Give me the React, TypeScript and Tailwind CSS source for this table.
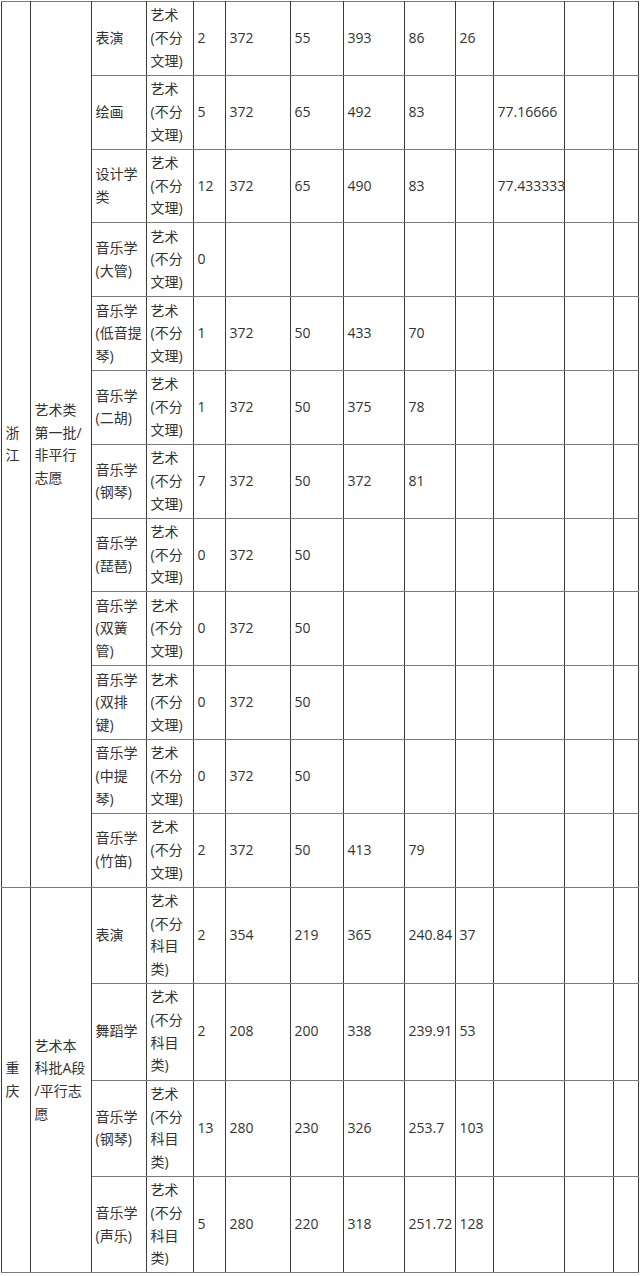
import React from "react";

type Row = { major: string[]; kind: string[]; cells: string[] };

const zjKind = ["艺术", "(不分", "文理)"];
const cqKind = ["艺术", "(不分", "科目", "类)"];

const zj: Row[] = [
  { major: ["表演"], kind: zjKind, cells: ["2", "372", "55", "393", "86", "26", "", "", ""] },
  { major: ["绘画"], kind: zjKind, cells: ["5", "372", "65", "492", "83", "", "77.16666", "", ""] },
  { major: ["设计学", "类"], kind: zjKind, cells: ["12", "372", "65", "490", "83", "", "77.433333", "", ""] },
  { major: ["音乐学", "(大管)"], kind: zjKind, cells: ["0", "", "", "", "", "", "", "", ""] },
  { major: ["音乐学", "(低音提", "琴)"], kind: zjKind, cells: ["1", "372", "50", "433", "70", "", "", "", ""] },
  { major: ["音乐学", "(二胡)"], kind: zjKind, cells: ["1", "372", "50", "375", "78", "", "", "", ""] },
  { major: ["音乐学", "(钢琴)"], kind: zjKind, cells: ["7", "372", "50", "372", "81", "", "", "", ""] },
  { major: ["音乐学", "(琵琶)"], kind: zjKind, cells: ["0", "372", "50", "", "", "", "", "", ""] },
  { major: ["音乐学", "(双簧", "管)"], kind: zjKind, cells: ["0", "372", "50", "", "", "", "", "", ""] },
  { major: ["音乐学", "(双排", "键)"], kind: zjKind, cells: ["0", "372", "50", "", "", "", "", "", ""] },
  { major: ["音乐学", "(中提", "琴)"], kind: zjKind, cells: ["0", "372", "50", "", "", "", "", "", ""] },
  { major: ["音乐学", "(竹笛)"], kind: zjKind, cells: ["2", "372", "50", "413", "79", "", "", "", ""] },
];

const cq: Row[] = [
  { major: ["表演"], kind: cqKind, cells: ["2", "354", "219", "365", "240.84", "37", "", "", ""] },
  { major: ["舞蹈学"], kind: cqKind, cells: ["2", "208", "200", "338", "239.91", "53", "", "", ""] },
  { major: ["音乐学", "(钢琴)"], kind: cqKind, cells: ["13", "280", "230", "326", "253.7", "103", "", "", ""] },
  { major: ["音乐学", "(声乐)"], kind: cqKind, cells: ["5", "280", "220", "318", "251.72", "128", "", "", ""] },
];

const widths = [29, 61, 55, 47, 32, 65, 53, 61, 51, 38, 71, 49, 25];

const td =
  "border-x border-x-[#3a3a3a] border-y border-y-[#7a7a7a] align-middle text-left pl-[3.5px] pr-[2px] py-[2.4px] leading-[22.67px] whitespace-nowrap overflow-hidden";

function Lines({ l }: { l: string[] }) {
  return (
    <>
      {l.map((s, i) => (
        <div key={i}>{s}</div>
      ))}
    </>
  );
}

function Section({ prov, batch, rows }: { prov: string[]; batch: string[]; rows: Row[] }) {
  return (
    <>
      {rows.map((r, i) => (
        <tr key={i}>
          {i === 0 && (
            <>
              <td rowSpan={rows.length} className={td}>
                <Lines l={prov} />
              </td>
              <td rowSpan={rows.length} className={td}>
                <Lines l={batch} />
              </td>
            </>
          )}
          <td className={td}>
            <Lines l={r.major} />
          </td>
          <td className={td}>
            <Lines l={r.kind} />
          </td>
          {r.cells.map((c, j) => (
            <td key={j} className={td}>
              {c}
            </td>
          ))}
        </tr>
      ))}
    </>
  );
}

export default function App() {
  return (
    <div className="w-[640px] bg-white pl-px pt-px">
      <table
        className="table-fixed border-collapse w-[637px] text-[14px] text-[#333333]"
        style={{ fontFamily: '"Open Sans", "Noto Sans CJK SC", sans-serif' }}
      >
        <colgroup>
          {widths.map((w, i) => (
            <col key={i} style={{ width: w }} />
          ))}
        </colgroup>
        <tbody>
          <Section prov={["浙", "江"]} batch={["艺术类", "第一批/", "非平行", "志愿"]} rows={zj} />
          <Section prov={["重", "庆"]} batch={["艺术本", "科批A段", "/平行志", "愿"]} rows={cq} />
        </tbody>
      </table>
    </div>
  );
}
